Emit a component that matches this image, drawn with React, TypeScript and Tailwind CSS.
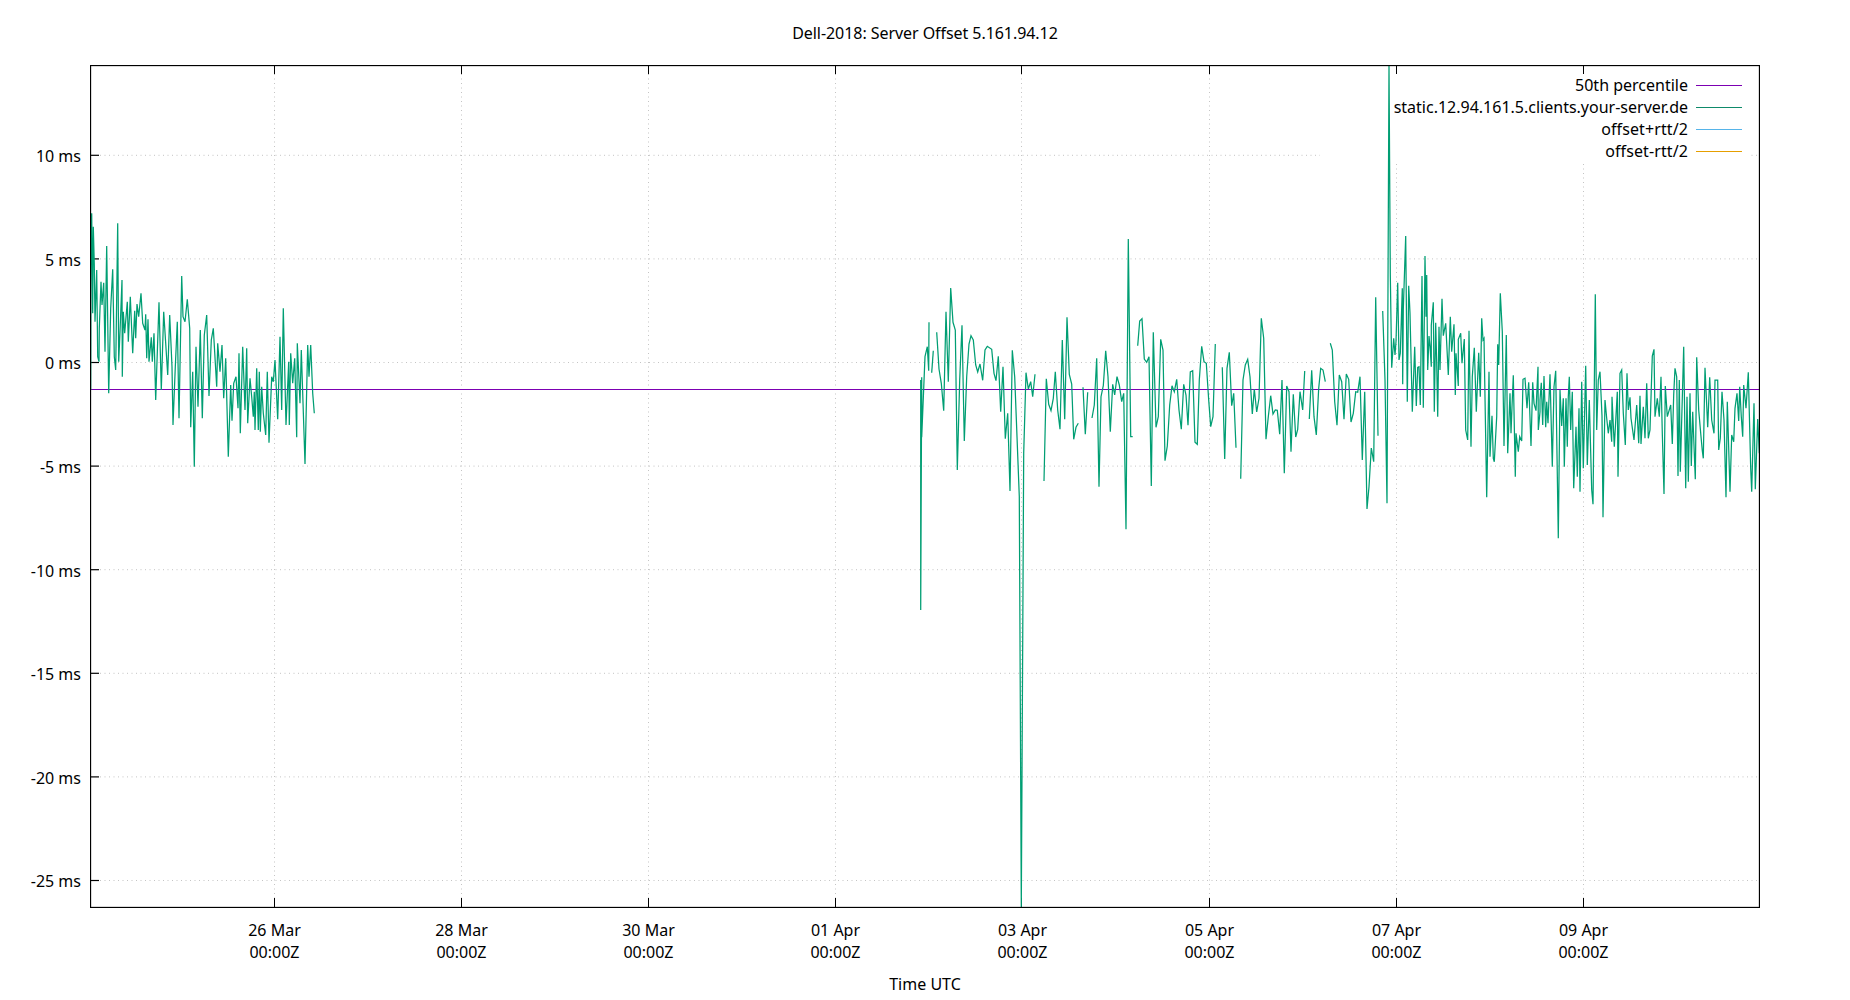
const GREEN = "#009e73";

// Traced from the plot, as zoom-crop coordinates (3x) per crop origin.
const crop = (x0: number, y0: number, pts: number[]) => {
  const out: string[] = [];
  for (let i = 0; i < pts.length; i += 2) {
    out.push(`${(x0 + pts[i] / 3).toFixed(1)},${(y0 + pts[i + 1] / 3).toFixed(1)}`);
  }
  return out.join(" ");
};

const SEGMENTS = [
  crop(0, 0, [
    272, 1170, 273, 720, 275, 640, 278, 940, 280, 680, 283, 795, 285, 965, 290, 810, 293, 1070, 297, 1085, 298, 985, 303, 845, 306, 915, 311, 848, 315, 1055, 320, 738, 326, 1180, 332, 925, 338, 808, 343, 1070, 347, 1110, 353, 670, 356, 1085, 360, 995, 366, 840, 367, 1130, 370, 935, 374, 1000, 382, 905, 385, 1025, 391, 890, 398, 1060, 404, 932, 407, 1015, 411, 912, 416, 950, 423, 880, 428, 970, 435, 990, 437, 943, 440, 1075, 444, 958, 447, 1085, 454, 1012, 457, 1085, 462, 1000, 467, 1200, 477, 907, 484, 1170, 491, 935, 497, 1030, 503, 1125, 509, 945, 516, 1100, 519, 1275, 526, 1100, 532, 965, 537, 1255, 545, 828, 549, 950, 555, 965, 562, 898, 569, 985, 572, 1282, 578, 1115, 583, 1400, 588, 1040, 594, 1220, 601, 990, 607, 1255, 613, 1005, 620, 945, 627, 1188, 634, 1020, 640, 985, 650, 1160, 653, 1030, 660, 1115, 666, 1035, 671, 1195, 677, 1075, 685, 1370, 692, 1155, 696, 1262, 701, 1150, 708, 1130, 714, 1225, 717, 1060, 721, 1300, 728, 1040, 735, 1230, 740, 1045, 743, 1270, 750, 1135, 755, 1190, 760, 1250, 763, 1175, 765, 1290, 770, 1105, 775, 1290, 778, 1115, 781, 1295, 785, 1160, 790, 1240, 797, 1305, 802, 1115, 807, 1328, 815, 1130, 820, 1145, 825, 1080, 833, 1258, 840, 1010, 845, 1230, 850, 925, 858, 1275, 866, 1085, 868, 1275, 872, 1060, 878, 1150, 884, 1075, 890, 1312, 892, 1030, 900, 1210, 904, 1050, 915, 1392, 923, 1035, 927, 1130, 932, 1035, 938, 1180, 943, 1240,
  ]),
  crop(900, 220, [
    62, 480, 62, 1170, 65, 472, 65, 652, 75, 410, 82, 380, 86, 452, 87, 307,
  ]),
  crop(900, 220, [95, 458, 100, 392]),
  crop(900, 220, [
    110, 337, 117, 447, 124, 490, 131, 572, 138, 275, 145, 485, 152, 204, 159, 307, 166, 330, 172, 750, 179, 480, 186, 316, 193, 663, 200, 470, 207, 372, 213, 347, 220, 360, 227, 435, 233, 456, 240, 432, 248, 481, 255, 390, 262, 379, 275, 388, 282, 460, 288, 482, 295, 409, 302, 575, 309, 440, 316, 656, 323, 580, 330, 813, 337, 391, 344, 470, 358, 830, 364, 2061, 371, 700, 378, 458, 385, 507, 392, 485, 398, 530, 405, 463,
  ]),
  crop(900, 220, [
    432, 783, 439, 476, 446, 553, 453, 572, 460, 535, 466, 455, 473, 570, 480, 628, 487, 360, 494, 598, 501, 292, 508, 463, 515, 492, 521, 658, 528, 622, 535, 610,
  ]),
  crop(900, 220, [549, 502, 556, 643, 563, 517]),
  crop(900, 220, [
    576, 594, 583, 555, 590, 415, 597, 800, 603, 530, 610, 497, 617, 392, 624, 470, 631, 635, 638, 493, 644, 525, 651, 470, 658, 495, 665, 545, 671, 520, 678, 928, 685, 57, 692, 650, 698, 650,
  ]),
  crop(900, 220, [
    713, 377, 719, 303, 726, 296, 733, 417, 740, 427, 747, 410, 754, 798, 760, 337, 768, 622, 775, 590, 782, 358, 789, 390, 795, 722, 802, 678, 809, 555, 816, 497, 823, 515, 830, 478, 837, 570, 844, 628, 851, 493, 858, 525, 864, 616, 871, 456, 878, 452, 885, 667, 892, 673, 898, 480, 905, 379, 912, 425, 919, 430, 926, 540, 932, 620, 939, 590, 946, 372,
  ]),
  crop(1220, 220, [
    7, 442, 14, 717, 21, 445, 28, 397, 35, 557, 41, 520, 48, 683,
  ]),
  crop(1220, 220, [
    62, 776, 69, 480, 76, 435, 83, 418, 90, 470, 97, 582, 103, 507, 110, 576, 117, 535, 124, 295, 131, 355, 138, 658, 145, 590, 152, 527, 159, 582, 166, 570, 172, 571, 179, 643, 186, 480, 193, 760, 200, 498, 207, 515, 213, 695, 220, 523, 227, 651, 233, 628, 240, 515, 248, 570, 254, 453,
  ]),
  crop(1220, 220, [
    268, 597, 275, 451, 282, 590, 289, 645, 296, 505, 302, 445, 309, 450, 316, 485,
  ]),
  crop(1220, 220, [
    331, 370, 337, 390, 344, 545, 351, 616, 358, 465, 365, 485, 372, 598, 379, 462, 386, 478, 393, 606, 400, 580, 407, 515, 413, 517, 420, 470, 427, 720, 434, 515, 441, 867, 447, 800, 454, 684, 461, 725, 467, 232, 474, 647,
  ]),
  crop(1220, 220, [
    488, 273, 495, 480, 501, 850, 507, -465, 511, 163, 515, 443, 521, 355, 525, 405, 528, 365, 533, 188, 537, 420, 541, 400, 547, 205, 548, 493, 550, 268, 557, 48, 562, 545, 566, 197, 570, 280, 577, 575, 584, 380, 589, 558, 593, 442, 597, 440, 601, 555, 606, 168, 610, 563, 615, 108, 618, 290, 620, 165, 623, 450, 627, 348, 630, 378, 634, 440, 634, 316, 640, 247, 643, 575, 647, 308, 650, 430, 653, 590, 657, 320, 660, 450, 666, 236, 670, 347, 677, 310, 685, 465, 691, 290, 695, 395, 702, 313, 706, 525, 708, 400, 715, 498, 715, 358, 722, 340, 726, 430, 733, 357, 737, 630, 743, 660, 747, 332, 753, 680, 757, 470, 763, 383, 769, 575, 776, 398, 781, 530, 785, 295, 789, 360, 792, 355, 800, 832, 807, 455, 810, 710, 816, 587, 820, 715, 823, 725, 830, 590, 833, 373, 836, 435, 841, 220, 847, 335, 852, 678, 859, 345, 863, 700, 870, 520, 873, 640, 876, 560, 880, 466, 886, 770, 888, 640, 895, 695, 899, 650, 905, 663, 909, 478, 915, 475, 921, 565, 926, 487, 933, 678, 938, 487, 942, 550, 948, 572, 954, 440, 955, 630, 960, 575,
  ]) +
    " " +
    crop(1540, 220, [
      0, 540, 4, 488, 8, 615, 12, 468, 17, 622, 20, 545, 24, 610, 30, 463, 37, 740, 42, 500, 47, 452, 55, 955, 60, 510, 65, 618, 70, 535, 73, 740, 78, 535, 82, 680, 85, 530, 88, 470, 92, 630, 97, 515, 101, 805, 108, 620, 112, 770, 117, 565, 120, 815, 125, 485, 130, 745, 137, 437, 142, 735, 148, 540, 155, 810, 159, 853, 166, 223, 170, 630, 175, 480, 180, 455, 186, 588, 189, 892, 195, 540, 200, 595, 205, 640, 210, 600, 215, 665, 216, 530, 223, 680, 232, 515, 234, 770, 240, 460, 245, 450, 250, 580, 256, 675, 261, 460, 265, 570, 270, 532, 273, 595, 282, 660, 290, 555, 296, 670, 300, 527, 303, 672, 310, 560, 315, 655, 320, 490, 325, 655, 330, 630, 337, 408, 342, 388, 345, 590, 352, 535, 358, 590, 363, 470, 367, 640, 372, 822, 376, 498, 382, 590, 392, 555, 397, 672, 401, 525, 405, 445, 410, 470, 414, 768, 418, 480, 421, 755, 431, 380, 437, 805, 441, 530, 445, 785, 450, 520, 454, 738, 458, 575, 466, 778, 470, 412, 476, 570, 482, 640, 487, 692, 490, 715, 495, 443, 503, 622, 509, 472, 515, 600, 522, 640, 525, 480, 533, 480, 536, 690, 541, 655, 546, 515, 552, 600, 558, 832, 562, 545, 570, 815, 575, 645, 581, 665, 585, 565, 591, 520, 596, 603, 599, 500, 604, 590, 608, 650, 611, 495, 618, 565, 625, 457, 632, 745, 635, 815, 642, 550, 646, 808, 653, 597, 658, 700,
    ]),
];

const Y_TICKS = [155.3, 258.9, 362.5, 466.1, 569.7, 673.3, 776.9, 880.5];
const Y_LABELS = ["10 ms", "5 ms", "0 ms", "-5 ms", "-10 ms", "-15 ms", "-20 ms", "-25 ms"];
const X_TICKS = [274.5, 461.5, 648.5, 835.5, 1021.5, 1209.5, 1396.5, 1583.5];
const X_LABELS = ["26 Mar", "28 Mar", "30 Mar", "01 Apr", "03 Apr", "05 Apr", "07 Apr", "09 Apr"];

const LEGEND = [
  { label: "50th percentile", sample: "bg-[#7c00b2]", text: "" },
  { label: "static.12.94.161.5.clients.your-server.de", sample: "bg-[#0e8a6a]", text: "" },
  { label: "offset+rtt/2", sample: "bg-[#56b4e9]", text: "tracking-[0.1px]" },
  { label: "offset-rtt/2", sample: "bg-[#e69f00]", text: "tracking-[0.1px]" },
];

function Plot() {
  return (
    <svg viewBox="90 65 1670 843" className="block h-[843px] w-[1670px]">
      {Y_TICKS.map((y) => (
        <line key={y} x1="100" x2="1758" y1={y} y2={y} stroke="#c4c4c4" strokeDasharray="1 3.5" />
      ))}
      {X_TICKS.map((x) => (
        <line key={x} x1={x} x2={x} y1="74" y2="898" stroke="#c4c4c4" strokeDasharray="1 3.5" />
      ))}
      {/* key box hides the grid only, data still runs over it */}
      <rect x="1320" y="74" width="430" height="89" fill="#fff" />
      {Y_TICKS.map((y) => (
        <line key={y} x1="90" x2="99" y1={y} y2={y} stroke="#000" strokeWidth="1.2" />
      ))}
      {X_TICKS.map((x) => (
        <g key={x}>
          <line x1={x} x2={x} y1="65" y2="74" stroke="#000" />
          <line x1={x} x2={x} y1="898" y2="907" stroke="#000" />
        </g>
      ))}
      <line x1="90" x2="1760" y1="389.5" y2="389.5" stroke="#7c00b2" shapeRendering="crispEdges" />
      {SEGMENTS.map((points, i) => (
        <polyline key={i} points={points} fill="none" stroke={GREEN} strokeWidth="1.25" />
      ))}
      <rect x="90.5" y="65.5" width="1669" height="842" fill="none" stroke="#000" strokeWidth="1.3" />
    </svg>
  );
}

function Legend() {
  return (
    <div className="absolute top-[9px] right-[18px] flex flex-col items-end">
      {LEGEND.map((row) => (
        <div key={row.label} className="flex h-[22px] items-center">
          <span className={`whitespace-nowrap ${row.text}`}>{row.label}</span>
          <span className={`ml-[8px] h-px w-[46px] ${row.sample}`} />
        </div>
      ))}
    </div>
  );
}

export default function App() {
  return (
    <div className="flex h-[1000px] w-[1850px] flex-col bg-white font-['Noto_Sans',sans-serif] text-[16px] leading-[22px] text-black">
      <div className="flex h-[65px] items-center justify-center tracking-[-0.06px]">
        Dell-2018: Server Offset 5.161.94.12
      </div>
      <div className="flex">
        <div className="flex h-[843px] w-[90px] flex-col pt-[39.5px]">
          {Y_LABELS.map((label) => (
            <div key={label} className="flex h-[103.6px] shrink-0 items-center justify-end pr-[9px]">
              {label}
            </div>
          ))}
        </div>
        <div className="relative">
          <Plot />
          <Legend />
        </div>
      </div>
      <div className="flex pt-[11px] pl-[181px]">
        {X_LABELS.map((label) => (
          <div key={label} className="w-[187px] text-center">
            {label}
            <br />
            00:00Z
          </div>
        ))}
      </div>
      <div className="mt-[10px] text-center">Time UTC</div>
    </div>
  );
}
